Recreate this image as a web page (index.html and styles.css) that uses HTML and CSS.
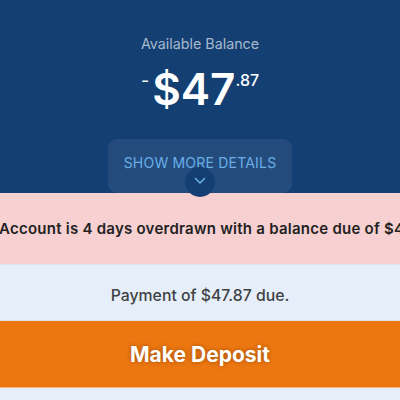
FILE: index.html
```html
<!DOCTYPE html>
<html lang="en">
<head>
  <meta charset="UTF-8">
  <meta name="viewport" content="width=device-width, initial-scale=1.0">
  <title>Account Balance</title>
  <link rel="stylesheet" href="styles.css">
</head>
<body>
  <header class="balance">
    <div class="balance-label">Available Balance</div>
    <div class="balance-amount">
      <span class="sign">-</span><span class="dollars">$47</span><span class="cents">.87</span>
    </div>
    <button class="details-btn">
      SHOW MORE DETAILS
      <span class="chevron">
        <svg width="12" height="8" viewBox="0 0 12 8"><path d="M1.5 1.5 L6 6 L10.5 1.5" fill="none" stroke="#6aaee8" stroke-width="1.6" stroke-linecap="round" stroke-linejoin="round"/></svg>
      </span>
    </button>
  </header>

  <div class="alert">
    <p>Account is 4 days overdrawn with a balance due of $47.87.</p>
  </div>

  <section class="payment">
    <p class="payment-due">Payment of $47.87 due.</p>
    <button class="deposit-btn">Make Deposit</button>
  </section>
</body>
</html>
```

FILE: styles.css
```css
body {
  font-family: 'Inter', 'Roboto', sans-serif;
  margin: 0;
  padding: 0;
  background: #e6eff9;
  overflow: hidden;
}

.balance {
  position: relative;
  z-index: 2;
  background: #133f73;
  display: flex;
  flex-direction: column;
  align-items: center;
  padding-top: 35px;
  height: 158px;
}

.balance-label {
  color: #a8b8cd;
  font-size: 14.3px;
  line-height: 18px;
}

.balance-amount {
  display: flex;
  align-items: flex-start;
  color: #fff;
  margin-top: 10px;
  height: 76px;
}

.sign {
  font-size: 18px;
  margin-top: 7px;
  margin-right: 3px;
}

.dollars {
  font-size: 44px;
  font-weight: 600;
  line-height: 52px;
}

.cents {
  font-size: 16px;
  font-weight: 500;
  margin-top: 7px;
}

.details-btn {
  position: relative;
  width: 184px;
  height: 54px;
  border: none;
  border-radius: 9px;
  background: rgba(255, 255, 255, 0.07);
  color: #6aaee8;
  font-family: inherit;
  font-size: 14px;
  letter-spacing: 0.2px;
  padding: 0 0 8px;
}

/* round tab that hangs over the bottom edge of the header */
.chevron {
  position: absolute;
  left: 50%;
  top: 28px;
  transform: translateX(-50%);
  width: 30px;
  height: 30px;
  border-radius: 50%;
  background: #133f73;
  display: flex;
  justify-content: center;
  align-items: center;
  padding-bottom: 3px;
  box-sizing: border-box;
}

.alert {
  position: relative;
  z-index: 1;
  background: #f7d0d1;
  height: 71px;
  display: flex;
  align-items: center;
  overflow: hidden;
  border-bottom: 1px solid #dde3ea;
}

.alert p {
  margin: 0 0 0 -1px;
  white-space: nowrap;
  font-size: 15px;
  letter-spacing: 0.25px;
  font-weight: 600;
  color: #222;
}

.payment {
  display: flex;
  flex-direction: column;
}

.payment-due {
  margin: 0;
  height: 55px;
  line-height: 62px;
  text-align: center;
  font-size: 15.8px;
  font-weight: 500;
  color: #3f4245;
  border-bottom: 1px solid #dde3ea;
}

.deposit-btn {
  height: 67px;
  border: none;
  background: #ec7711;
  color: #fff;
  font-family: inherit;
  font-size: 21px;
  font-weight: 700;
  text-shadow: 0 0 4px rgba(90, 40, 0, 0.5);
  border-bottom: 1px solid #f5b57a;
}
```
